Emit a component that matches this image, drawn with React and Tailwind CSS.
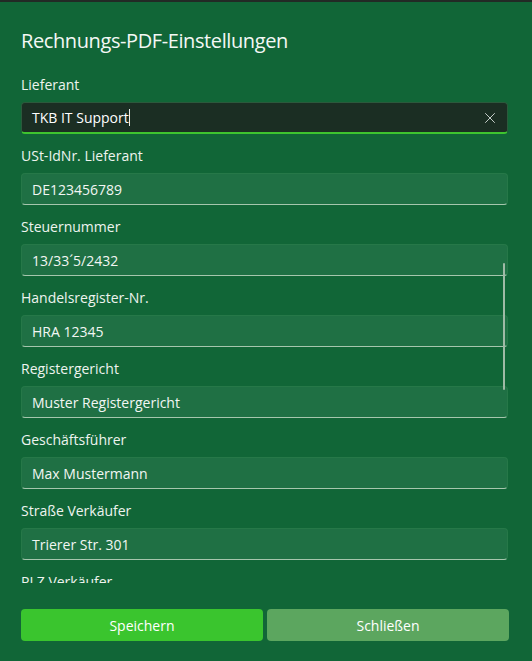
import { X } from "lucide-react";

const fields = [
  { label: "USt-IdNr. Lieferant", value: "DE123456789" },
  { label: "Steuernummer", value: "13/33´5/2432" },
  { label: "Handelsregister-Nr.", value: "HRA 12345" },
  { label: "Registergericht", value: "Muster Registergericht" },
  { label: "Geschäftsführer", value: "Max Mustermann" },
  { label: "Straße Verkäufer", value: "Trierer Str. 301" },
  { label: "PLZ Verkäufer", value: "54294" },
];

export default function App() {
  return (
    <div
      className="w-[532px] h-[661px] flex flex-col bg-[#116637] border-t-2 border-[#222a25] text-[#eef4ef] overflow-hidden"
      style={{ fontFamily: '"Open Sans", "Noto Sans", sans-serif' }}
    >
      {/* --- Header --- */}
      <div className="h-[62px] px-[21px] pt-[25px]">
        <h1 className="text-[20px] leading-[28px] font-normal tracking-[-0.4px] text-[#f4f8f5]">Rechnungs-PDF-Einstellungen</h1>
      </div>

      {/* --- Scrollable form --- */}
      <div className="relative flex-1 overflow-hidden">
        <div className="pl-[21px] pr-[24px] pt-[11px]">
          <div className="mb-[12px]">
            <div className="h-5 leading-5 text-[14px] mb-[7px]">Lieferant</div>
            <div className="h-8 flex items-center rounded-[4px] bg-[#1b2e23] border border-[#2b5a3c] border-b-2 border-b-[#3ec42f] pl-[10px] pr-[8px]">
              <span className="text-[14px] text-white">TKB IT Support</span>
              <span className="w-px h-[17px] bg-[#e8ece9]" />
              <div className="flex-1" />
              <X size={18} strokeWidth={1.3} className="text-[#c9d1cc]" />
            </div>
          </div>

          {fields.map((f) => (
            <div key={f.label} className="mb-[12px]">
              <div className="h-5 leading-5 text-[14px] mb-[7px]">{f.label}</div>
              <div className="h-8 flex items-center rounded-[4px] bg-[#1f7044] border border-[#267848] border-b-[#a6c6ad] pl-[10px]">
                <span className="text-[14px] text-[#f2f6f3]">{f.value}</span>
              </div>
            </div>
          ))}
        </div>

        {/* scrollbar thumb */}
        <div className="absolute left-[503px] top-[199px] w-[2px] h-[127px] rounded-full bg-[#9fbaa6]" />
      </div>

      {/* --- Footer buttons --- */}
      <div className="pl-[21px] pr-[23px] pt-[26px] pb-[20px] grid grid-cols-2 gap-1">
        <button className="h-8 rounded-[4px] bg-[#3ac52e] text-[14px] text-white">Speichern</button>
        <button className="h-8 rounded-[4px] bg-[#5ca65f] text-[14px] text-white">Schließen</button>
      </div>
    </div>
  );
}
